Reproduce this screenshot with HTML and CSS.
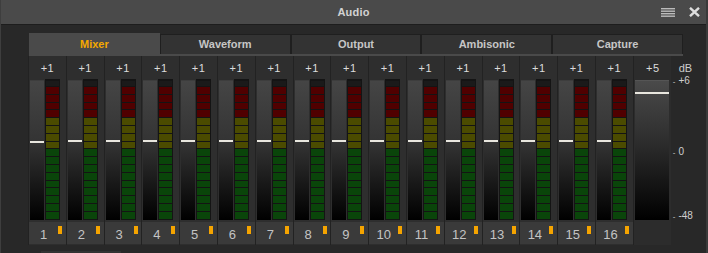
FILE: index.html
```html
<!DOCTYPE html>
<html lang="en">
<head>
    <meta charset="UTF-8">
    <title>Audio</title>
    <link rel="stylesheet" href="styles.css">
</head>
<body>
<div class="window">
    <div class="titlebar">
        <span></span>
        <span class="title">Audio</span>
        <div class="title-icons">
            <svg class="menu-icon" width="14" height="9" viewBox="0 0 14 9">
                <rect x="0" y="0" width="14" height="1.4" fill="#bbb"/>
                <rect x="0" y="2.5" width="14" height="1.4" fill="#bbb"/>
                <rect x="0" y="5" width="14" height="1.4" fill="#bbb"/>
                <rect x="0" y="7.5" width="14" height="1.4" fill="#bbb"/>
            </svg>
            <svg class="close-icon" width="11" height="10" viewBox="0 0 11 10">
                <path d="M1 0.8 L10 9.2 M10 0.8 L1 9.2" stroke="#ddd" stroke-width="2.4"/>
            </svg>
        </div>
    </div>

    <div class="content">
        <div class="tabs">
            <div class="tab active">Mixer</div>
            <div class="tab">Waveform</div>
            <div class="tab">Output</div>
            <div class="tab">Ambisonic</div>
            <div class="tab">Capture</div>
        </div>

        <div class="mixer">
            <div class="strip"><div class="gain">+1</div><div class="controls"><div class="fader"><div class="handle" style="top: 60px"></div></div><div class="meter"></div></div><div class="footer"><span class="num">1</span><span class="led"></span></div></div>
            <div class="strip"><div class="gain">+1</div><div class="controls"><div class="fader"><div class="handle" style="top: 59px"></div></div><div class="meter"></div></div><div class="footer"><span class="num">2</span><span class="led"></span></div></div>
            <div class="strip"><div class="gain">+1</div><div class="controls"><div class="fader"><div class="handle" style="top: 59px"></div></div><div class="meter"></div></div><div class="footer"><span class="num">3</span><span class="led"></span></div></div>
            <div class="strip"><div class="gain">+1</div><div class="controls"><div class="fader"><div class="handle" style="top: 59px"></div></div><div class="meter"></div></div><div class="footer"><span class="num">4</span><span class="led"></span></div></div>
            <div class="strip"><div class="gain">+1</div><div class="controls"><div class="fader"><div class="handle" style="top: 59px"></div></div><div class="meter"></div></div><div class="footer"><span class="num">5</span><span class="led"></span></div></div>
            <div class="strip"><div class="gain">+1</div><div class="controls"><div class="fader"><div class="handle" style="top: 59px"></div></div><div class="meter"></div></div><div class="footer"><span class="num">6</span><span class="led"></span></div></div>
            <div class="strip"><div class="gain">+1</div><div class="controls"><div class="fader"><div class="handle" style="top: 59px"></div></div><div class="meter"></div></div><div class="footer"><span class="num">7</span><span class="led"></span></div></div>
            <div class="strip"><div class="gain">+1</div><div class="controls"><div class="fader"><div class="handle" style="top: 59px"></div></div><div class="meter"></div></div><div class="footer"><span class="num">8</span><span class="led"></span></div></div>
            <div class="strip"><div class="gain">+1</div><div class="controls"><div class="fader"><div class="handle" style="top: 59px"></div></div><div class="meter"></div></div><div class="footer"><span class="num">9</span><span class="led"></span></div></div>
            <div class="strip"><div class="gain">+1</div><div class="controls"><div class="fader"><div class="handle" style="top: 59px"></div></div><div class="meter"></div></div><div class="footer"><span class="num">10</span><span class="led"></span></div></div>
            <div class="strip"><div class="gain">+1</div><div class="controls"><div class="fader"><div class="handle" style="top: 59px"></div></div><div class="meter"></div></div><div class="footer"><span class="num">11</span><span class="led"></span></div></div>
            <div class="strip"><div class="gain">+1</div><div class="controls"><div class="fader"><div class="handle" style="top: 59px"></div></div><div class="meter"></div></div><div class="footer"><span class="num">12</span><span class="led"></span></div></div>
            <div class="strip"><div class="gain">+1</div><div class="controls"><div class="fader"><div class="handle" style="top: 59px"></div></div><div class="meter"></div></div><div class="footer"><span class="num">13</span><span class="led"></span></div></div>
            <div class="strip"><div class="gain">+1</div><div class="controls"><div class="fader"><div class="handle" style="top: 59px"></div></div><div class="meter"></div></div><div class="footer"><span class="num">14</span><span class="led"></span></div></div>
            <div class="strip"><div class="gain">+1</div><div class="controls"><div class="fader"><div class="handle" style="top: 59px"></div></div><div class="meter"></div></div><div class="footer"><span class="num">15</span><span class="led"></span></div></div>
            <div class="strip"><div class="gain">+1</div><div class="controls"><div class="fader"><div class="handle" style="top: 59px"></div></div><div class="meter"></div></div><div class="footer"><span class="num">16</span><span class="led"></span></div></div>

            <div class="master">
                <div class="gain">+5</div>
                <div class="master-fader"><div class="handle" style="top: 11px"></div></div>
            </div>

            <div class="scale">
                <div class="scale-title">dB</div>
                <div class="scale-marks">
                    <span class="mark" style="top: -3px">+6</span>
                    <span class="mark" style="top: 68px">0</span>
                    <span class="mark" style="top: 132px">-48</span>
                </div>
            </div>
        </div>
        <div class="scrollbar"><div class="thumb"></div></div>
    </div>
</div>
</body>
</html>
```

FILE: styles.css
```css
body {
    margin: 0;
    background-color: #282828;
    font-family: "Liberation Sans", Arial, sans-serif;
}
.window {
    width: 708px;
    height: 253px;
    box-sizing: border-box;
    border-left: 1px solid #3e3e3e;
    border-right: 2px solid #3a3a3a;
    background-color: #282828;
    overflow: hidden;
}
.titlebar {
    height: 24px;
    display: grid;
    grid-template-columns: 1fr auto 1fr;
    align-items: center;
    background-color: #4a4a4a;
    border-bottom: 1px solid #1d1d1d;
}
.title {
    color: #d2d2d2;
    font-size: 11px;
    font-weight: bold;
    letter-spacing: 0.2px;
}
.title-icons {
    display: flex;
    justify-content: flex-end;
    align-items: center;
    gap: 14px;
    padding-right: 6px;
}
.menu-icon {
    margin-top: 1px;
}
.content {
    padding-left: 27px;
}
.tabs {
    display: flex;
    margin-top: 8px;
    margin-left: 1px;
    width: 654px;
    height: 21px;
    border-bottom: 2px solid #4a4a4a;
    align-items: flex-end;
}
.tab {
    flex: 1;
    height: 20px;
    box-sizing: border-box;
    background-color: #333;
    border: 1px solid #1f1f1f;
    border-bottom: none;
    color: #c6c6c6;
    font-size: 11px;
    font-weight: bold;
    text-align: center;
    line-height: 19px;
}
.tab.active {
    height: 21px;
    background-color: #4a4a4a;
    border-color: #4a4a4a;
    color: #f5a800;
    line-height: 21px;
}
.mixer {
    display: flex;
    height: 189px;
}
.strip {
    width: 37.8px;
    box-sizing: border-box;
    border-left: 1px solid #222;
    background-color: #2e2e2e;
    display: flex;
    flex-direction: column;
}
.gain {
    height: 23px;
    line-height: 24px;
    color: #dcdcdc;
    font-size: 11px;
    letter-spacing: 0.5px;
    text-align: center;
}
.controls {
    display: flex;
    gap: 1px;
    padding-left: 1px;
    height: 141px;
}
.fader {
    position: relative;
    width: 14px;
    margin-top: 1px;
    height: 139px;
    background: linear-gradient(#454545, #333 45%, #000);
    border-top: 1px solid #3d3d3d;
}
.handle {
    position: absolute;
    left: 0;
    right: 0;
    height: 2px;
    background-color: #e8e6de;
}
.meter {
    width: 13px;
    height: 139px;
    border: 1px solid #141414;
    background:
        repeating-linear-gradient(to bottom, #141414 0 1px, transparent 1px 7.8px) 0 6px,
        linear-gradient(to bottom, #1a1a1a 0 7px, #500000 7px 38px, #4b4b00 38px 69px, #0a450a 69px);
}
.footer {
    height: 22px;
    margin-top: 2px;
    background-color: #3a3a3a;
    display: flex;
    align-items: flex-start;
}
.num {
    width: 29px;
    text-align: center;
    color: #c4c4c4;
    font-size: 13px;
    line-height: 25px;
}
.led {
    width: 4px;
    height: 8px;
    margin-top: 4px;
    background-color: #f5a400;
}
.master {
    width: 38px;
    box-sizing: border-box;
    border-left: 1px solid #222;
    background-color: #2c2c2c;
    padding-left: 1px;
}
.master-fader {
    position: relative;
    width: 34px;
    height: 139px;
    margin-top: 1px;
    background: linear-gradient(#4a4a4a, #2c2c2c 45%, #000);
    border-top: 1px solid #555;
}
.scale {
    width: 30px;
    padding-left: 2px;
}
.scale-title {
    height: 23px;
    line-height: 24px;
    color: #ccc;
    font-size: 11px;
    padding-left: 6px;
}
.scale-marks {
    position: relative;
    height: 140px;
}
.mark {
    position: absolute;
    left: 0;
    color: #cfcfcf;
    font-size: 10px;
    line-height: 10px;
    white-space: nowrap;
}
.mark::before {
    content: "-";
    font-size: 8px;
    margin-right: 3px;
}
.scrollbar {
    height: 4px;
    margin-top: 6px;
}
.thumb {
    width: 80px;
    height: 3px;
    margin-left: 13px;
    background-color: #333;
}
```
